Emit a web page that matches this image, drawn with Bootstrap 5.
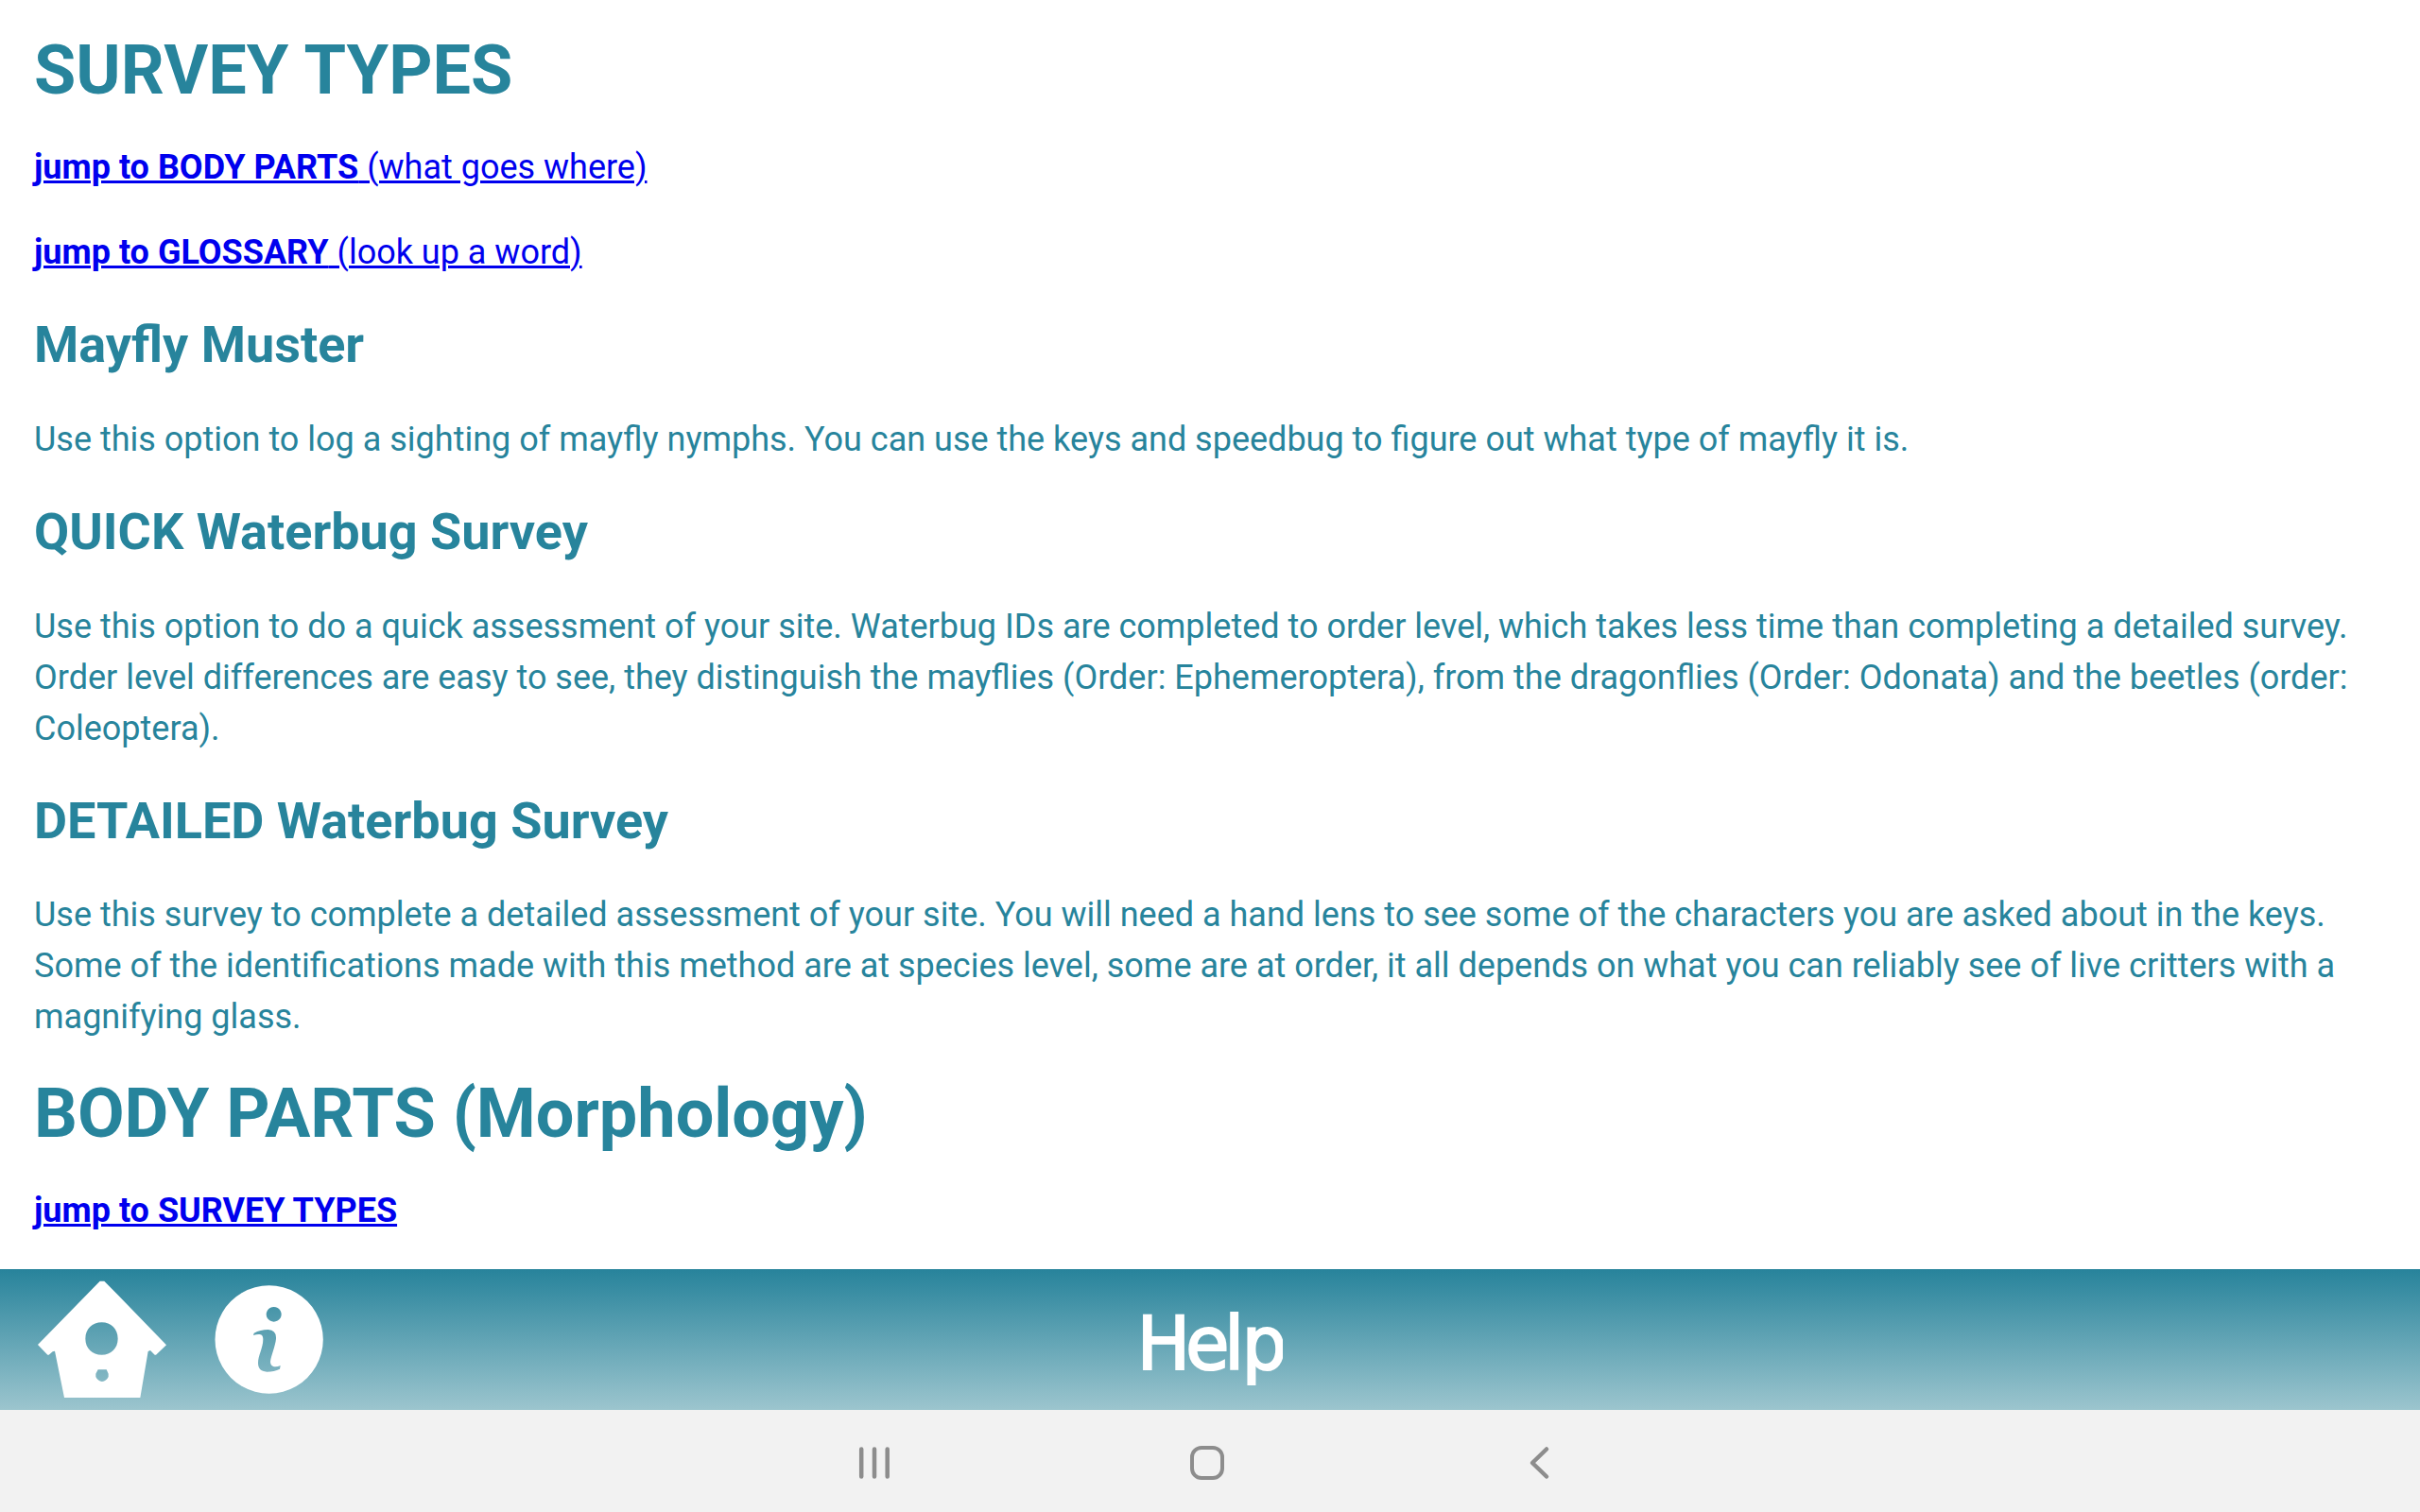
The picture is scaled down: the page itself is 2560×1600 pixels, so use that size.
<!DOCTYPE html>
<html lang="en">
<head>
<meta charset="utf-8">
<title>Help</title>
<link href="https://cdn.jsdelivr.net/npm/bootstrap@5.3.0/dist/css/bootstrap.min.css" rel="stylesheet">
<style>
body{font-family:Roboto,sans-serif;font-size:36px;line-height:54px;color:#27849c;background:#fff}
.help-body{padding:21px 36px 0;height:1343px}
.help-body h1{font-size:72px;line-height:108px;font-weight:700;margin:0 0 21px}
.help-body h2{font-size:54px;line-height:81px;font-weight:700;margin:30px 0 33px}
.help-body h2:last-of-type{margin-bottom:32px}
.help-body p{margin:0}
.help-body p+p{margin-top:36px}
.help-body p+h1{margin-top:22px}
.help-body a{color:#00e;text-decoration:underline;text-decoration-thickness:3px;text-underline-offset:2px}
.title-bar{height:149px;padding:12px 39px 0;background:linear-gradient(#27839b,#9cc5ce)}
.bar-side{flex:1 1 0;gap:50px}
.info-icon{margin-top:5px}
.sys-bar{height:108px;background:#f2f2f2}
</style>
<script src="https://cdn.jsdelivr.net/npm/bootstrap@5.3.0/dist/js/bootstrap.bundle.min.js"></script>
</head>
<body class="vh-100 overflow-hidden d-flex flex-column">
<main class="help-body overflow-hidden flex-shrink-0">
<h1 id="survey">SURVEY TYPES</h1>
<p><a href="#body"><b>jump to BODY PARTS</b> (what goes where)</a></p>
<p><a href="#glossary"><b>jump to GLOSSARY</b> (look up a word)</a></p>
<h2>Mayfly Muster</h2>
<p>Use this option to log a sighting of mayfly nymphs. You can use the keys and speedbug to figure out what type of mayfly it is.</p>
<h2>QUICK Waterbug Survey</h2>
<p>Use this option to do a quick assessment of your site. Waterbug IDs are completed to order level, which takes less time than completing a detailed survey. Order level differences are easy to see, they distinguish the mayflies (Order: Ephemeroptera), from the dragonflies (Order: Odonata) and the beetles (order: Coleoptera).</p>
<h2>DETAILED Waterbug Survey</h2>
<p>Use this survey to complete a detailed assessment of your site. You will need a hand lens to see some of the characters you are asked about in the keys. Some of the identifications made with this method are at species level, some are at order, it all depends on what you can reliably see of live critters with a magnifying glass.</p>
<h1 id="body">BODY PARTS (Morphology)</h1>
<p><a href="#survey"><b>jump to SURVEY TYPES</b></a></p>
</main>
<footer class="title-bar d-flex align-items-start flex-shrink-0">
  <div class="bar-side d-flex align-items-start">
    <svg width="138" height="125" viewBox="117 75 414 375" fill="#fff"><path fill-rule="evenodd" d="M317 77H331L374 121L528 280L495 311H491L477 297L470 300L445 447H204L174 299L167 301L155 311H151L120 279ZM323 208C352 208 374 229 374 260C374 290 352 311 323 311C293 311 271 290 271 260C271 229 293 208 323 208ZM311 358H338L344 371V381Q337 395 324 396Q311 394 304 381V371Z"/></svg>
    <svg class="info-icon" width="115" height="115" viewBox="681 90 345 345"><path fill="#fff" fill-rule="evenodd" d="M854 91A171.500 171.500 0 1 1 853.900 91ZM869 159A24 23.500 0 1 0 869.100 159ZM804 249L806 242Q826 231 851 231Q878 233 876 260C874 282 860 316 858 332C858 350 874 352 890 345L888 356Q870 365 847 365C827 364 819 354 819 337C819 312 835 290 835 261C835 244 822 244 804 249Z"/></svg>
  </div>
  <svg width="154" height="125" viewBox="0 0 154 125"><g transform="scale(.95 1)"><text x="-.300 53.900 97.200 116.500" y="94" font-family="DejaVu Sans, sans-serif" font-size="79" fill="#fff" stroke="#fff" stroke-width="2.200">Help</text></g></svg>
  <div class="bar-side"></div>
</footer>
<nav class="sys-bar d-flex justify-content-center flex-shrink-0">
  <svg width="760" height="108" viewBox="900 1492 760 108" fill="none" stroke="#8d8d8d" stroke-width="4.500" stroke-linecap="round" stroke-linejoin="round">
    <path d="M911.200 1533.500V1562.500M925 1533.500V1562.500M938.700 1533.500V1562.500"/>
    <rect x="1261" y="1532" width="32" height="32" rx="10" stroke-width="4"/>
    <path d="M1636 1533.500L1621 1548L1636 1562.500"/>
  </svg>
</nav>
</body>
</html>
